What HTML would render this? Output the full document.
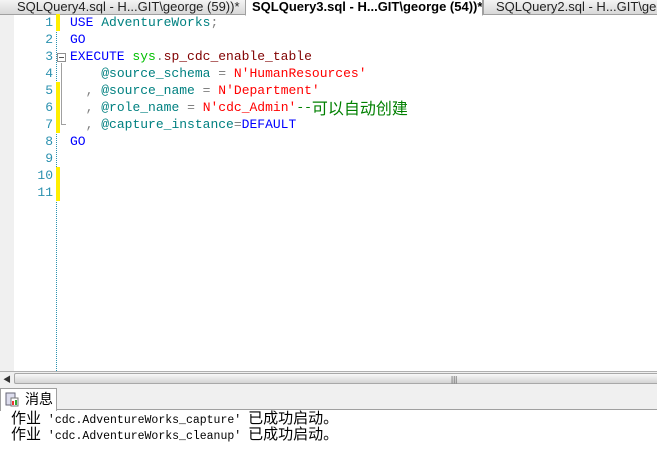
<!DOCTYPE html>
<html><head><meta charset="utf-8"><style>
*{margin:0;padding:0;box-sizing:border-box}
body{width:657px;height:459px;overflow:hidden;background:#fff;position:relative;font-family:"Liberation Sans","Noto Sans CJK SC",sans-serif}
.tabs{position:absolute;left:0;top:0;width:657px;height:15px;background:#fff;border-bottom:1px solid #a0a0a0}
.tab{position:absolute;top:0;height:15px;font-size:13px;line-height:13px;color:#222;background:linear-gradient(#f4f4f4,#d8d8d8);border:1px solid #a0a0a0;border-top:none;white-space:nowrap;overflow:hidden;padding-left:18px}
.tab.act{background:#fff;font-weight:bold;color:#000;border-bottom:1px solid #fff;height:16px;padding-left:6px}
.gut{position:absolute;left:0;top:15px;width:14px;height:356px;background:#f0f0f0}
.ln{position:absolute;left:14px;width:39px;text-align:right;font:13px/17px "Liberation Mono",monospace;color:#2b91af}
.code{position:absolute;left:70px;font:13px/17px "Courier New","Liberation Mono","Noto Sans CJK SC",monospace;white-space:pre}
.dot{position:absolute;left:56px;top:15px;height:356px;border-left:1px dotted #2b91af}
.y{position:absolute;left:56px;width:4px;background:#ffee00}
.k{color:#0000ff}.t{color:#008080}.s{color:#ff0000}.g{color:#808080}.gr{color:#00c000}.m{color:#800000}.c{color:#008000}
.cj{display:inline-block;height:17px;vertical-align:top;font-family:"Noto Sans CJK SC",sans-serif;font-size:16px;line-height:16px}
.sb{position:absolute;left:0;top:371px;width:657px;height:13px;background:#f0f0f0;border-top:1px solid #b0b0b0}
.thumb{position:absolute;left:14px;top:1px;width:650px;height:11px;background:linear-gradient(#f8f8f8,#d4d4d4);border:1px solid #a8a8a8;border-radius:2px}
.msgbar{position:absolute;left:0;top:384px;width:657px;height:26px;background:#f0f0f0;border-bottom:1px solid #a0a0a0}
.mtab{position:absolute;left:0;top:388px;width:57px;height:23px;background:#fff;border:1px solid #a0a0a0;border-bottom:none;font-size:14px;line-height:20px;padding-left:24px}
.msg{position:absolute;left:11px;font:11.5px/16px "Liberation Mono","Noto Sans CJK SC",monospace;white-space:pre;color:#000}
.msg span{font-family:"Noto Sans CJK SC",sans-serif;font-size:15px;line-height:16px}
</style></head><body>
<div class="tabs">
<div class="tab" style="left:-2px;width:250px">SQLQuery4.sql - H...GIT\george (59))*</div>
<div class="tab" style="left:483px;width:180px;padding-left:12px">SQLQuery2.sql - H...GIT\george</div>
<div class="tab act" style="left:245px;width:238px">SQLQuery3.sql - H...GIT\george (54))*</div>
</div>
<div class="gut"></div>
<div class="dot"></div>
<div class="y" style="top:14px;height:17px"></div>
<div class="y" style="top:82px;height:51px"></div>
<div class="y" style="top:167px;height:34px"></div>
<div style="position:absolute;left:57px;top:53px;width:9px;height:9px;border:1px solid #909090;background:#fff"></div>
<div style="position:absolute;left:59px;top:57px;width:5px;height:1px;background:#555"></div>
<div style="position:absolute;left:61px;top:63px;width:1px;height:61px;background:#a0a0a0"></div>
<div style="position:absolute;left:61px;top:124px;width:5px;height:1px;background:#a0a0a0"></div>
<div class="ln" style="top:14px">1<br>2<br>3<br>4<br>5<br>6<br>7<br>8<br>9<br>10<br>11</div>
<div class="code" style="top:14px"><span class="k">USE</span> <span class="t">AdventureWorks</span><span class="g">;</span>
<span class="k">GO</span>
<span class="k">EXECUTE</span> <span class="gr">sys</span><span class="g">.</span><span class="m">sp_cdc_enable_table</span>
    <span class="t">@source_schema</span> <span class="g">=</span> <span class="s">N'HumanResources'</span>
  <span class="g">,</span> <span class="t">@source_name</span> <span class="g">=</span> <span class="s">N'Department'</span>
  <span class="g">,</span> <span class="t">@role_name</span> <span class="g">=</span> <span class="s">N'cdc_Admin'</span><span class="c">--<span class="cj">可以自动创建</span></span>
  <span class="g">,</span> <span class="t">@capture_instance</span><span class="g">=</span><span class="k">DEFAULT</span>
<span class="k">GO</span></div>
<div class="sb"><div style="position:absolute;left:3px;top:2px;font-size:8px;color:#333">◀</div><div class="thumb"><div style="position:absolute;left:436px;top:1px;font-size:8px;color:#555">|||</div></div></div>
<div class="msgbar"></div>
<div class="mtab"><svg style="position:absolute;left:4px;top:3px" width="14" height="15"><rect x="1" y="1" width="9" height="12" fill="#dde" stroke="#667"/><rect x="6" y="6" width="7" height="8" fill="#fff" stroke="#777"/><rect x="7" y="9" width="2" height="4" fill="#e33"/><rect x="10" y="8" width="2" height="5" fill="#3a3"/></svg>消息</div>
<div class="msg" style="top:410px"><span>作业</span> 'cdc.AdventureWorks_capture' <span>已成功启动。</span></div>
<div class="msg" style="top:426px"><span>作业</span> 'cdc.AdventureWorks_cleanup' <span>已成功启动。</span></div>
</body></html>
